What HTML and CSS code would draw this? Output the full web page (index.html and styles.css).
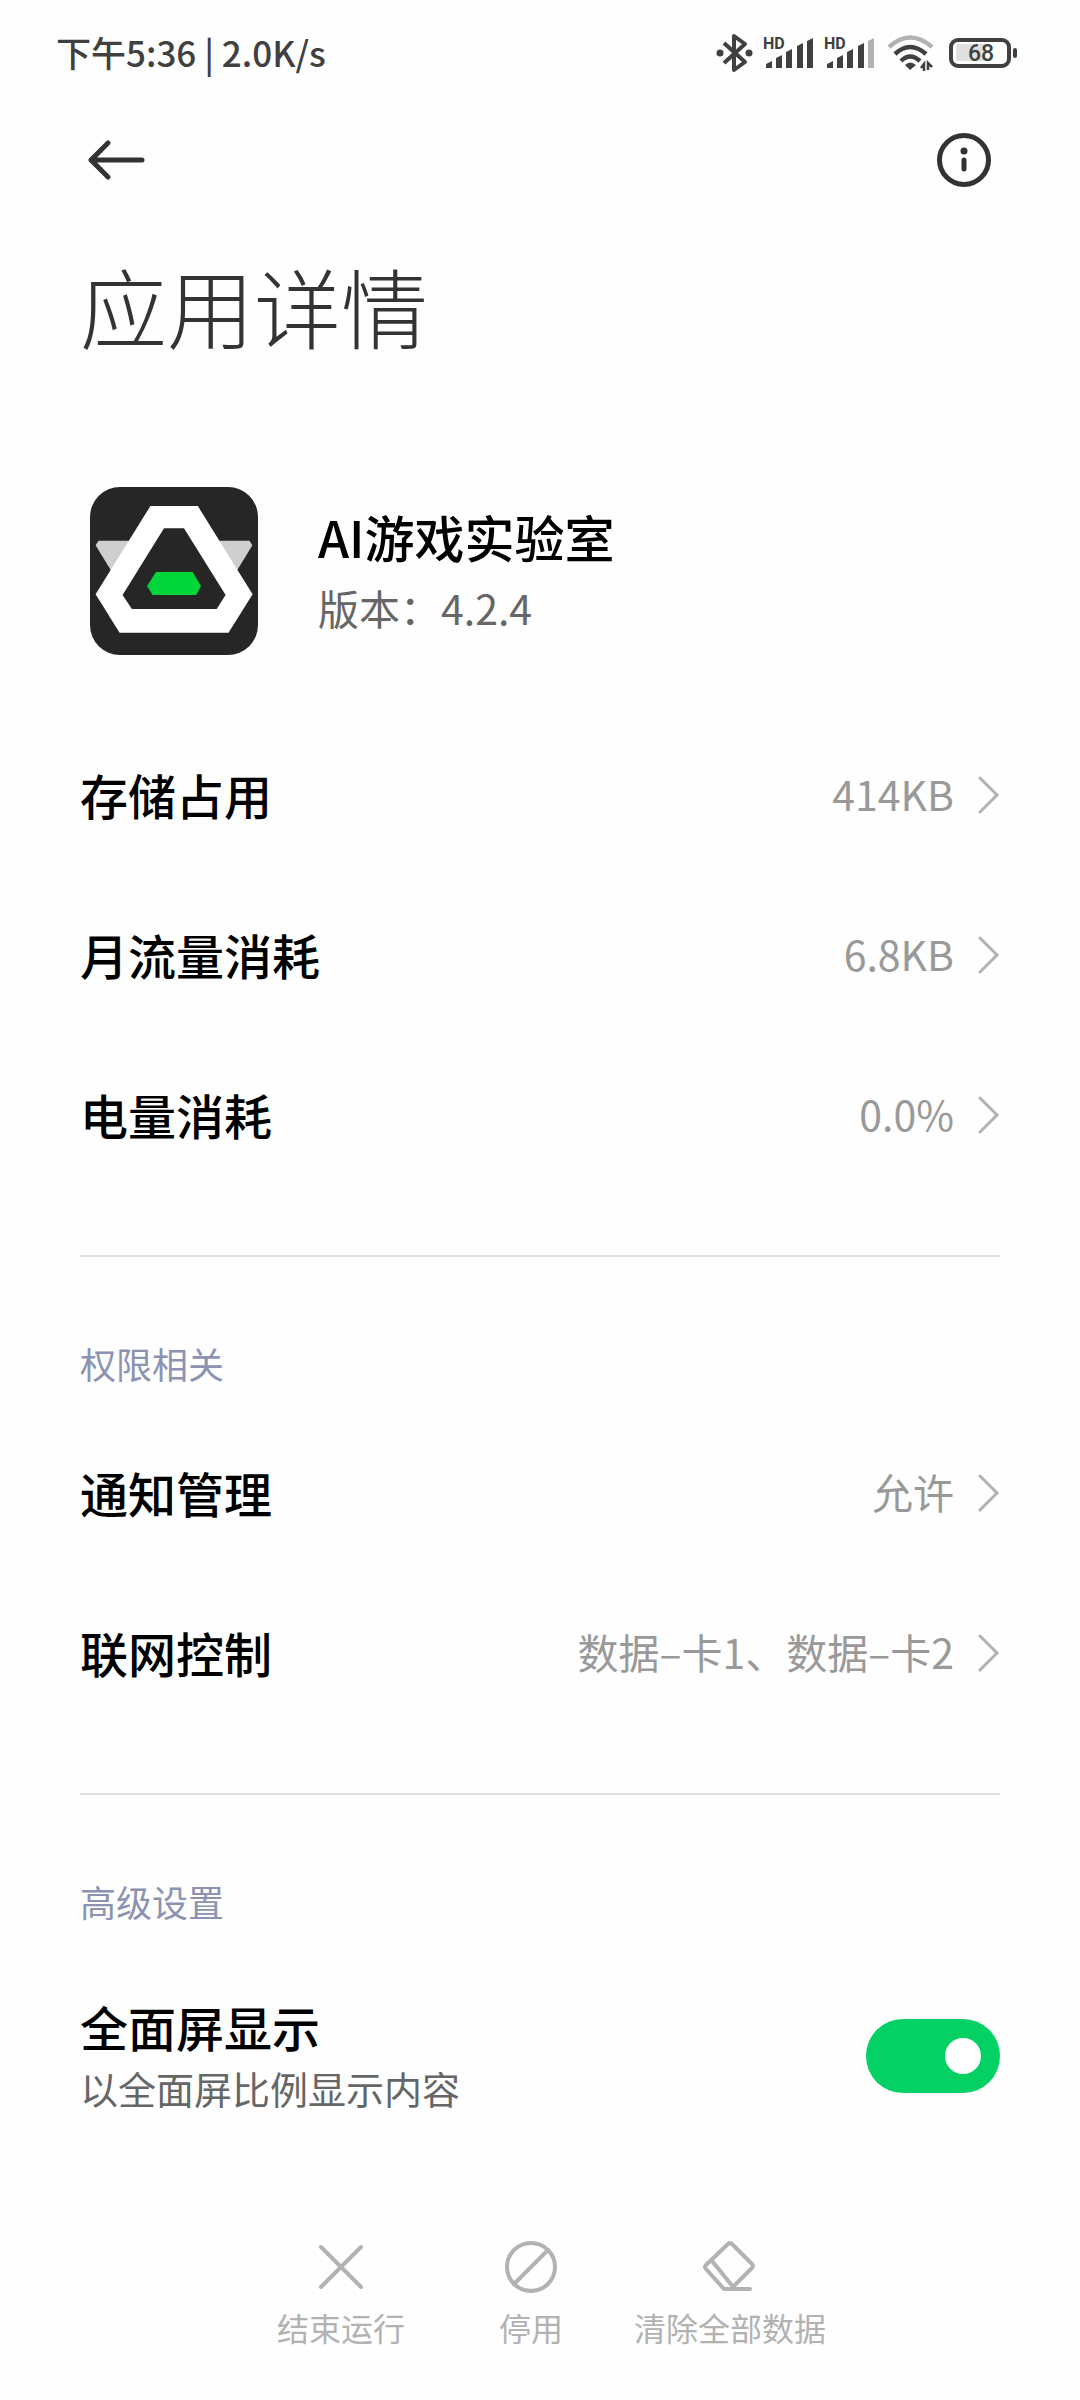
FILE: index.html
```html
<!DOCTYPE html>
<html lang="zh-CN">
<head>
    <meta charset="UTF-8">
    <meta name="viewport" content="width=device-width, initial-scale=1.0">
    <title>应用详情</title>
    <link rel="stylesheet" href="styles.css">
</head>
<body>
    <div id="app">
        <div class="status-bar">
            <span class="status-time">下午5:36 | 2.0K/s</span>
            <div class="status-icons">
                <svg width="38" height="40" viewBox="0 0 38 40" fill="none" stroke="#404040" stroke-width="4" stroke-linejoin="round">
                    <path d="M8 10L29 29L18 37V3L29 11L8 30"/>
                    <circle cx="4" cy="20" r="3.5" fill="#404040" stroke="none"/>
                    <circle cx="33" cy="20" r="3.5" fill="#404040" stroke="none"/>
                </svg>
                <svg class="signal" width="52" height="44" viewBox="0 -6 52 44" fill="#404040">
                    <text x="0" y="12">HD</text>
                    <path d="M3 31V27L9 24V31ZM13 31V21L19 18V31ZM23 31V15L29 12V31ZM34 31V9L40 6V31ZM44 31V4L50 1V31Z"/>
                </svg>
                <svg class="signal" width="52" height="44" viewBox="0 -6 52 44" fill="#404040">
                    <text x="0" y="12">HD</text>
                    <path d="M3 31V27L9 24V31ZM13 31V21L19 18V31ZM23 31V15L29 12V31ZM34 31V9L40 6V31Z"/>
                    <path d="M44 31V4L50 1V31Z" fill="#b2b2b2"/>
                </svg>
                <svg class="wifi" width="48" height="38" viewBox="0 0 48 38" fill="none" stroke="#404040" stroke-width="4.5">
                    <path d="M2 13Q23 -6 45 13" stroke="#b2b2b2"/>
                    <path d="M8 20Q23 6 39 20"/>
                    <path d="M14 27Q23 18 33 27"/>
                    <path d="M18 31Q23 26 29 31L23 36Z" fill="#404040" stroke="none"/>
                    <path d="M34 34L37 30V37M41 36V29L45 33" stroke-width="2.5"/>
                </svg>
                <svg class="battery" width="70" height="32" viewBox="0 0 70 32">
                    <rect x="8" y="7" width="29" height="17" rx="3" fill="#e0e0e0"/>
                    <rect x="3" y="3" width="58" height="26" rx="7" fill="none" stroke="#404040" stroke-width="4"/>
                    <rect x="65" y="11" width="4" height="10" rx="2" fill="#404040"/>
                    <text x="33" y="24" text-anchor="middle" fill="#404040">68</text>
                </svg>
            </div>
        </div>

        <header class="toolbar">
            <button class="icon-btn" aria-label="返回">
                <svg width="60" height="60" viewBox="0 0 60 60" fill="none" stroke="#333" stroke-width="5" stroke-linecap="round" stroke-linejoin="round">
                    <path d="M28 13L11 30L28 47M11 30H62"/>
                </svg>
            </button>
            <button class="icon-btn" aria-label="应用信息">
                <svg width="60" height="60" viewBox="0 0 60 60">
                    <circle cx="30" cy="30" r="24.5" fill="none" stroke="#333" stroke-width="5"/>
                    <circle cx="30" cy="21" r="3.5" fill="#333"/>
                    <path d="M30 30V39" stroke="#333" stroke-width="5" stroke-linecap="round"/>
                </svg>
            </button>
        </header>

        <main>
            <h1>应用详情</h1>

            <div class="app-info">
                <svg width="168" height="168" viewBox="0 0 168 168">
                    <rect width="168" height="168" rx="30" fill="#262626"/>
                    <path d="M8.5 53.7H159.5L162.4 58.3L147.3 83H20.7L5.6 58.3Z" fill="#cfcfcf"/>
                    <path d="M60.4 19H107.8L162.6 107.3L138.5 145.7H29.6L5.6 107.3Z" fill="#fff"/>
                    <path d="M74 41.3H94L135.6 108L126.7 122H41.9L32.6 108Z" fill="#262626"/>
                    <path d="M66 85H102.6L111 99L106.3 108H62.6L57 99Z" fill="#00d639"/>
                </svg>
                <div>
                    <h2>AI游戏实验室</h2>
                    <p class="version">版本：4.2.4</p>
                </div>
            </div>

            <section>
                <a href="#" class="row">
                    <span class="row-title">存储占用</span>
                    <span class="row-value">414KB</span>
                    <svg class="chevron" viewBox="0 0 22 38"><path d="M2 2L19 19L2 36"/></svg>
                </a>
                <a href="#" class="row">
                    <span class="row-title">月流量消耗</span>
                    <span class="row-value">6.8KB</span>
                    <svg class="chevron" viewBox="0 0 22 38"><path d="M2 2L19 19L2 36"/></svg>
                </a>
                <a href="#" class="row">
                    <span class="row-title">电量消耗</span>
                    <span class="row-value">0.0%</span>
                    <svg class="chevron" viewBox="0 0 22 38"><path d="M2 2L19 19L2 36"/></svg>
                </a>
            </section>

            <section class="group">
                <h3>权限相关</h3>
                <a href="#" class="row">
                    <span class="row-title">通知管理</span>
                    <span class="row-value">允许</span>
                    <svg class="chevron" viewBox="0 0 22 38"><path d="M2 2L19 19L2 36"/></svg>
                </a>
                <a href="#" class="row">
                    <span class="row-title">联网控制</span>
                    <span class="row-value">数据–卡1、数据–卡2</span>
                    <svg class="chevron" viewBox="0 0 22 38"><path d="M2 2L19 19L2 36"/></svg>
                </a>
            </section>

            <section class="group">
                <h3>高级设置</h3>
                <div class="row row-switch">
                    <label class="row-title" for="fullscreen">全面屏显示
                        <span class="row-summary">以全面屏比例显示内容</span>
                    </label>
                    <input type="checkbox" id="fullscreen" class="switch" checked>
                </div>
            </section>
        </main>

        <footer class="actions">
            <button class="action">
                <svg width="60" height="60" viewBox="0 0 60 60">
                    <path d="M10 10L50 50M50 10L10 50"/>
                </svg>
                结束运行
            </button>
            <button class="action">
                <svg width="60" height="60" viewBox="0 0 60 60">
                    <circle cx="30" cy="30" r="24"/>
                    <path d="M47 13L13 47"/>
                </svg>
                停用
            </button>
            <button class="action">
                <svg width="60" height="60" viewBox="0 0 60 60">
                    <path d="M24 52L6 32Q4 30 6 28L28 7Q30 5 32 7L52 27Q54 29 52 31L32 51M12 24L34 51M24 52H50"/>
                </svg>
                清除全部数据
            </button>
        </footer>
    </div>
</body>
</html>
```

FILE: styles.css
```css
:root {
    --bg-color: #fefefe;
    --text-color: #000;
    --icon-color: #333;
    --muted: #666;
    --value: #999;
    --disabled: #b2b2b2;
    --category: #8c93b0;
    --line: #e0e0e0;
    --accent: #03d163;
}

* {
    box-sizing: border-box;
}

body {
    font-family: "Noto Sans CJK SC", sans-serif;
    background-color: var(--bg-color);
    color: var(--text-color);
    margin: 0;
}

h1, h2, h3, p {
    margin: 0;
}

svg {
    display: block;
    flex-shrink: 0;
}

button {
    background: none;
    border: none;
    padding: 0;
    font-family: inherit;
    cursor: pointer;
}

#app {
    min-height: 100vh;
    display: flex;
    flex-direction: column;
}

/* status bar */
.status-bar {
    display: flex;
    justify-content: space-between;
    align-items: center;
    height: 106px;
    padding: 0 62px 0 56px;
    color: #404040;
}

.status-time {
    padding-bottom: 4px;
    font-size: 35px;
    font-weight: 500;
}

.status-icons {
    display: flex;
    align-items: center;
    gap: 9px;
}

.signal text,
.battery text {
    font-family: Roboto, sans-serif;
    font-size: 16px;
    font-weight: 700;
}

.wifi {
    margin-left: 2px;
}

.battery {
    margin-left: 4px;
}

.battery text {
    font-size: 23px;
    font-weight: 500;
}

/* toolbar */
.toolbar {
    display: flex;
    justify-content: space-between;
    align-items: center;
    height: 108px;
    padding: 0 86px 0 80px;
}

.icon-btn svg {
    overflow: visible;
}

main {
    padding: 0 80px;
}

h1 {
    margin-top: 36px;
    font-size: 87px;
    font-weight: 300;
    line-height: 110px;
    color: var(--icon-color);
}

.app-info {
    display: flex;
    align-items: center;
    gap: 60px;
    margin: 127px 0 60px;
    padding-left: 10px;
}

h2 {
    font-size: 50px;
    font-weight: 500;
    line-height: 72px;
}

.version {
    font-size: 41px;
    line-height: 70px;
    color: var(--muted);
}

/* setting rows */
.group {
    margin-top: 60px;
    border-top: 2px solid var(--line);
}

h3 {
    margin: 82px 0 26px;
    font-size: 36px;
    font-weight: 400;
    line-height: 48px;
    color: var(--category);
}

.row {
    display: flex;
    align-items: center;
    height: 160px;
    color: inherit;
    text-decoration: none;
}

.row-title {
    flex: 1;
    padding-bottom: 3px;
    font-size: 48px;
    font-weight: 500;
    line-height: 66px;
}

.row-value {
    padding-bottom: 4px;
    font-size: 41px;
    color: var(--value);
}

.chevron {
    width: 22px;
    height: 38px;
    margin-left: 24px;
    fill: none;
    stroke: var(--disabled);
    stroke-width: 3;
    stroke-linecap: round;
}

.row-switch {
    height: 210px;
}

.row-summary {
    display: block;
    font-size: 38px;
    font-weight: 400;
    line-height: 58px;
    color: var(--muted);
}

.switch {
    appearance: none;
    display: flex;
    align-items: center;
    width: 134px;
    height: 74px;
    margin: 0;
    padding: 0 19px;
    border-radius: 37px;
    background-color: var(--line);
    cursor: pointer;
}

.switch::before {
    content: "";
    width: 36px;
    height: 36px;
    border-radius: 50%;
    background-color: #fff;
}

.switch:checked {
    justify-content: flex-end;
    background-color: var(--accent);
}

/* bottom actions */
.actions {
    display: flex;
    justify-content: center;
    gap: 16px;
    margin-top: auto;
    padding-bottom: 51px;
}

.action {
    display: flex;
    flex-direction: column;
    align-items: center;
    gap: 8px;
    min-width: 174px;
    font-size: 32px;
    line-height: 44px;
    color: var(--disabled);
}

.action svg {
    fill: none;
    stroke: var(--disabled);
    stroke-width: 4;
    stroke-linecap: round;
    stroke-linejoin: round;
}
```
